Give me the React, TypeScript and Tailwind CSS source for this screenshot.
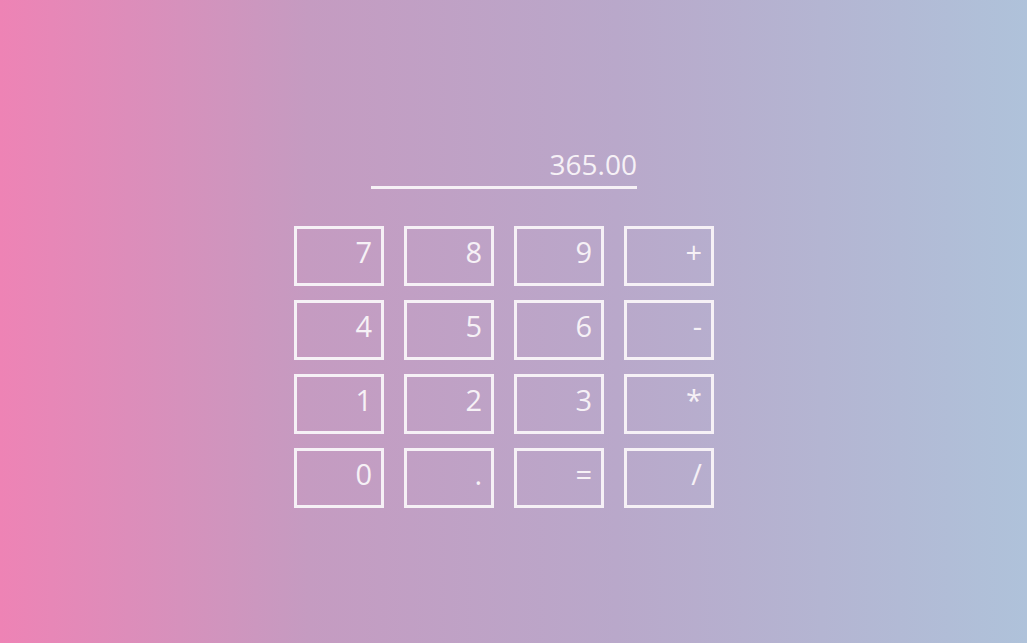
export default function App() {
  const keys = ["7", "8", "9", "+", "4", "5", "6", "-", "1", "2", "3", "*", "0", ".", "=", "/"];

  return (
    <div
      className="min-h-[643px] w-full bg-[linear-gradient(to_right,#ee83b5_0%,#c59bc1_30%,#b9a8ca_60%,#afc2da_100%)] text-[#f6f1f6]"
      style={{ fontFamily: '"Open Sans", "Noto Sans", sans-serif' }}
    >
      <div className="flex flex-col items-center pt-[147px] pr-[19px]">
        <div className="w-[266px] border-b-[3px] border-[#f6f1f6] pb-[4px] text-right text-[28px] leading-[35px]">
          365.00
        </div>

        <div className="mt-[37px] grid grid-cols-[repeat(4,90px)] gap-x-5 gap-y-[14px]">
          {keys.map((k) => (
            <button
              key={k}
              className="flex h-[60px] items-start justify-end border-[3px] border-[#f6f1f6] pr-[9px] pt-[1px] text-[29px]"
            >
              {k}
            </button>
          ))}
        </div>
      </div>
    </div>
  );
}
